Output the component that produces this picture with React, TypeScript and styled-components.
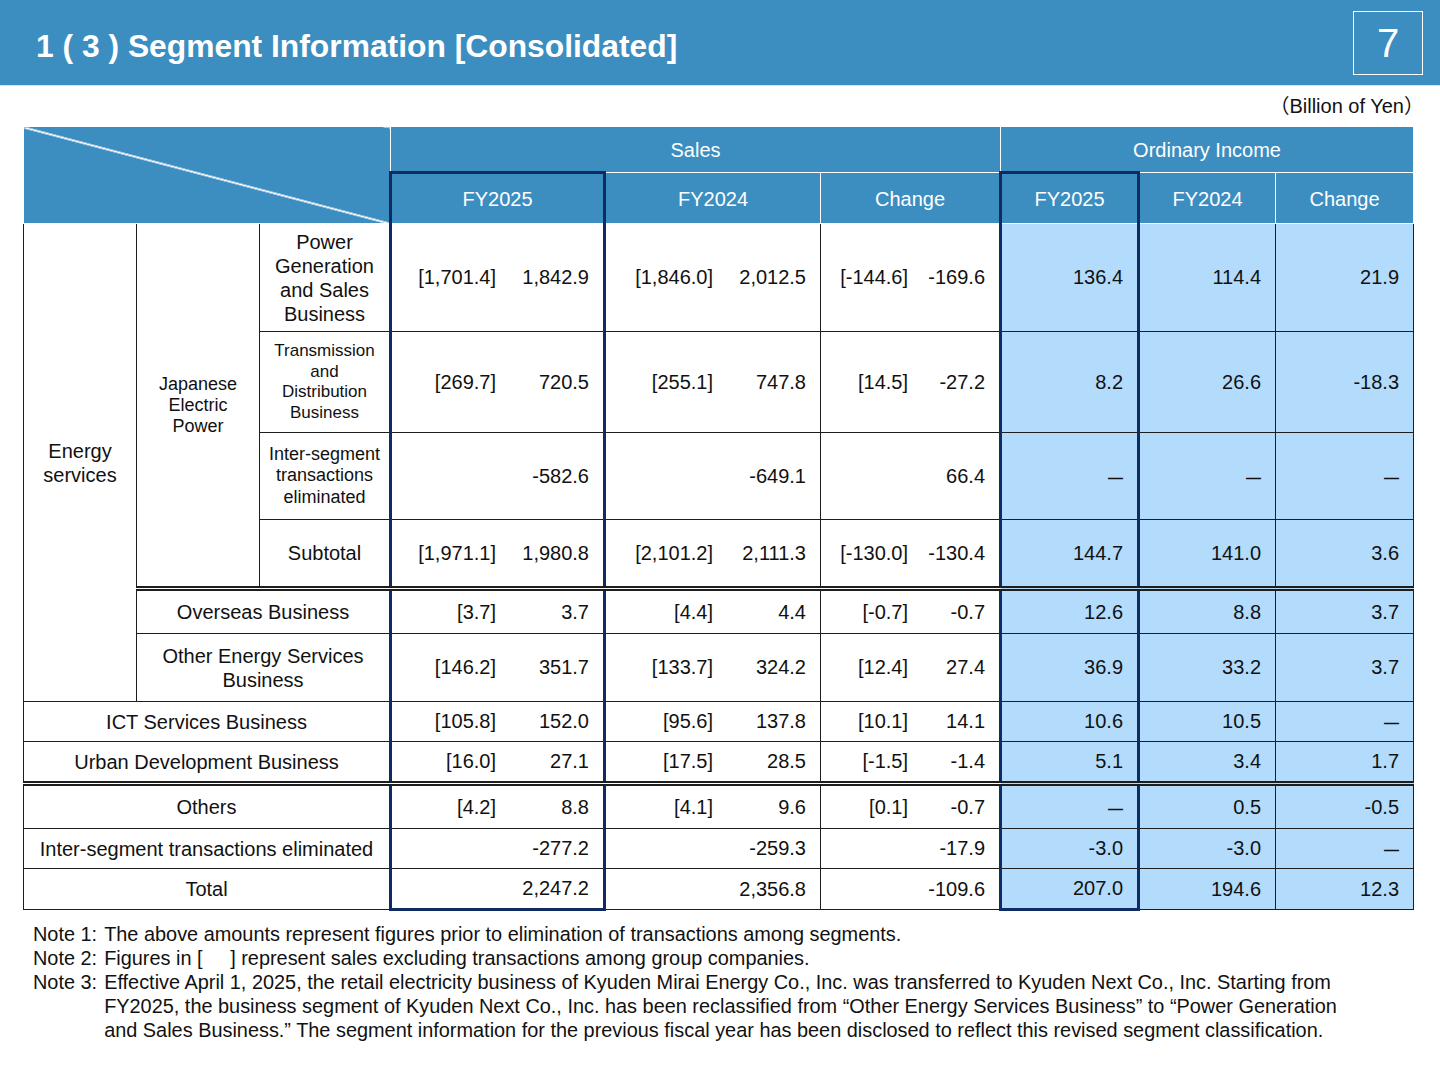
import React from "react";
import styled, { createGlobalStyle, css } from "styled-components";

const GlobalStyle = createGlobalStyle`
  body {
    margin: 0;
    background: #ffffff;
    font-family: "Liberation Sans", Arial, "Noto Sans CJK JP", sans-serif;
    color: #111111;
  }
`;

const BLUE = "#3c8dc0";
const LIGHT = "#b2dbfc";
const NAVY = "#0f2b63";
const LINE = "#1e1e1e";

type Pair = [string, string];

interface Figures {
  sales: [Pair, Pair, Pair];
  income: [string, string, string];
}

const App = () => {
  return (
    <Page>
      <GlobalStyle />
      <TitleBar>
        <Title>1 ( 3 ) Segment Information [Consolidated]</Title>
        <PageNo>7</PageNo>
      </TitleBar>
      <Unit>（Billion of Yen）</Unit>
      <TableWrap>
        <Table>
          <colgroup>
            <col style={{ width: 113 }} />
            <col style={{ width: 123 }} />
            <col style={{ width: 131 }} />
            <col style={{ width: 214 }} />
            <col style={{ width: 216 }} />
            <col style={{ width: 180 }} />
            <col style={{ width: 138 }} />
            <col style={{ width: 137 }} />
            <col style={{ width: 138 }} />
          </colgroup>
          <thead>
            <HeadRow $h={46}>
              <Corner colSpan={3} rowSpan={2} />
              <HeadCell colSpan={3}>Sales</HeadCell>
              <HeadCell colSpan={3}>Ordinary Income</HeadCell>
            </HeadRow>
            <HeadRow $h={51}>
              <HeadCell $box>FY2025</HeadCell>
              <HeadCell>FY2024</HeadCell>
              <HeadCell>Change</HeadCell>
              <HeadCell $box>FY2025</HeadCell>
              <HeadCell>FY2024</HeadCell>
              <HeadCell>Change</HeadCell>
            </HeadRow>
          </thead>
          <tbody>
            <BodyRow $h={108}>
              <Label rowSpan={6}>Energy<br />services</Label>
              <Label rowSpan={4} $size={18} $lh={21}>Japanese<br />Electric<br />Power</Label>
              <Label $lh={24}>Power<br />Generation<br />and Sales<br />Business</Label>
              <NumberCells data={{
                sales: [["[1,701.4]", "1,842.9"], ["[1,846.0]", "2,012.5"], ["[-144.6]", "-169.6"]],
                income: ["136.4", "114.4", "21.9"],
              }} />
            </BodyRow>
            <BodyRow $h={101}>
              <Label $size={17} $lh={20.5}>Transmission<br />and<br />Distribution<br />Business</Label>
              <NumberCells data={{
                sales: [["[269.7]", "720.5"], ["[255.1]", "747.8"], ["[14.5]", "-27.2"]],
                income: ["8.2", "26.6", "-18.3"],
              }} />
            </BodyRow>
            <BodyRow $h={87}>
              <Label $size={18} $lh={21.5}>Inter-segment<br />transactions<br />eliminated</Label>
              <NumberCells data={{
                sales: [["", "-582.6"], ["", "-649.1"], ["", "66.4"]],
                income: ["—", "—", "—"],
              }} />
            </BodyRow>
            <BodyRow $h={69}>
              <Label>Subtotal</Label>
              <NumberCells data={{
                sales: [["[1,971.1]", "1,980.8"], ["[2,101.2]", "2,111.3"], ["[-130.0]", "-130.4"]],
                income: ["144.7", "141.0", "3.6"],
              }} />
            </BodyRow>
            <BodyRow $h={45} $double>
              <Label colSpan={2}>Overseas Business</Label>
              <NumberCells data={{
                sales: [["[3.7]", "3.7"], ["[4.4]", "4.4"], ["[-0.7]", "-0.7"]],
                income: ["12.6", "8.8", "3.7"],
              }} />
            </BodyRow>
            <BodyRow $h={68}>
              <Label colSpan={2} $lh={24}>Other Energy Services<br />Business</Label>
              <NumberCells data={{
                sales: [["[146.2]", "351.7"], ["[133.7]", "324.2"], ["[12.4]", "27.4"]],
                income: ["36.9", "33.2", "3.7"],
              }} />
            </BodyRow>
            <BodyRow $h={40}>
              <Label colSpan={3}>ICT Services Business</Label>
              <NumberCells data={{
                sales: [["[105.8]", "152.0"], ["[95.6]", "137.8"], ["[10.1]", "14.1"]],
                income: ["10.6", "10.5", "—"],
              }} />
            </BodyRow>
            <BodyRow $h={42}>
              <Label colSpan={3}>Urban Development Business</Label>
              <NumberCells data={{
                sales: [["[16.0]", "27.1"], ["[17.5]", "28.5"], ["[-1.5]", "-1.4"]],
                income: ["5.1", "3.4", "1.7"],
              }} />
            </BodyRow>
            <BodyRow $h={45} $double>
              <Label colSpan={3}>Others</Label>
              <NumberCells data={{
                sales: [["[4.2]", "8.8"], ["[4.1]", "9.6"], ["[0.1]", "-0.7"]],
                income: ["—", "0.5", "-0.5"],
              }} />
            </BodyRow>
            <BodyRow $h={40}>
              <Label colSpan={3}>Inter-segment transactions eliminated</Label>
              <NumberCells data={{
                sales: [["", "-277.2"], ["", "-259.3"], ["", "-17.9"]],
                income: ["-3.0", "-3.0", "—"],
              }} />
            </BodyRow>
            <BodyRow $h={41}>
              <Label colSpan={3}>Total</Label>
              <NumberCells last data={{
                sales: [["", "2,247.2"], ["", "2,356.8"], ["", "-109.6"]],
                income: ["207.0", "194.6", "12.3"],
              }} />
            </BodyRow>
          </tbody>
        </Table>
      </TableWrap>
      <Notes>
        <Note>
          <NoteLabel>Note 1:</NoteLabel>
          <NoteText>The above amounts represent figures prior to elimination of transactions among segments.</NoteText>
        </Note>
        <Note>
          <NoteLabel>Note 2:</NoteLabel>
          <NoteText>Figures in [&nbsp;&nbsp;&nbsp;&nbsp;&nbsp;] represent sales excluding transactions among group companies.</NoteText>
        </Note>
        <Note>
          <NoteLabel>Note 3:</NoteLabel>
          <NoteText>
            Effective April 1, 2025, the retail electricity business of Kyuden Mirai Energy Co., Inc. was transferred to Kyuden Next Co., Inc. Starting from<br />
            FY2025, the business segment of Kyuden Next Co., Inc. has been reclassified from “Other Energy Services Business” to “Power Generation<br />
            and Sales Business.” The segment information for the previous fiscal year has been disclosed to reflect this revised segment classification.
          </NoteText>
        </Note>
      </Notes>
    </Page>
  );
};
export default App;

// six figure cells of one row: three sales columns, three income columns
const NumberCells = ({ data, last }: { data: Figures; last?: boolean }) => (
  <>
    {data.sales.map(([bracket, amount], i) => (
      <SalesCell key={"s" + i} $box={i === 0} $last={last}>
        <Split>
          {bracket && <Bracket>{bracket}</Bracket>}
          <Amount $w={i === 2 ? 77 : 93}>{amount}</Amount>
        </Split>
      </SalesCell>
    ))}
    {data.income.map((v, i) => (
      <IncomeCell key={"i" + i} $box={i === 0} $last={last}>
        {v === "—" ? <Dash>—</Dash> : v}
      </IncomeCell>
    ))}
  </>
);

const Page = styled.div`
  width: 1440px;
  min-height: 1080px;
`;

const TitleBar = styled.header`
  height: 86px;
  box-sizing: border-box;
  background: ${BLUE};
  border-bottom: 1px solid #d5e6f1;
  display: flex;
  align-items: center;
  justify-content: space-between;
  padding: 1px 17px 0 36px;
`;

const Title = styled.h1`
  margin: 6px 0 0;
  color: #ffffff;
  font-size: 31.8px;
  font-weight: bold;
  letter-spacing: 0;
`;

const PageNo = styled.div`
  width: 68px;
  height: 62px;
  border: 1px solid #ffffff;
  color: #ffffff;
  font-size: 40px;
  display: flex;
  align-items: center;
  justify-content: center;
`;

const Unit = styled.div`
  text-align: right;
  padding: 8px 16px 8px 0;
  font-size: 20px;
  line-height: 24px;
`;

const TableWrap = styled.div`
  padding-left: 23px;
`;

const Table = styled.table`
  width: 1390px;
  table-layout: fixed;
  border-collapse: collapse;
  font-size: 20px;
`;

const HeadRow = styled.tr<{ $h: number }>`
  height: ${(p) => p.$h}px;
`;

const HeadCell = styled.th<{ $box?: boolean }>`
  background: ${BLUE};
  color: #ffffff;
  font-weight: normal;
  font-size: 20px;
  text-align: center;
  padding: 2px 0 0;
  border: 1px solid #ffffff;
  ${(p) =>
    p.$box &&
    css`
      border-top: 3px solid ${NAVY};
      border-left: 3px solid ${NAVY};
      border-right: 3px solid ${NAVY};
    `}
`;

const Corner = styled.th`
  padding: 0;
  border: 1px solid #ffffff;
  border-left: none;
  background: linear-gradient(
      to top right,
      transparent calc(50% - 1.2px),
      #ffffff calc(50% - 0.6px),
      #ffffff calc(50% + 0.6px),
      transparent calc(50% + 1.2px)
    ),
    ${BLUE};
`;

const BodyRow = styled.tr<{ $h: number; $double?: boolean }>`
  height: ${(p) => p.$h}px;
  ${(p) =>
    p.$double &&
    css`
      & > td {
        border-top: 5px double ${LINE};
      }
    `}
`;

const Label = styled.td<{ $size?: number; $lh?: number }>`
  border: 1px solid ${LINE};
  text-align: center;
  padding: 0 3px;
  font-size: ${(p) => p.$size ?? 20}px;
  line-height: ${(p) => p.$lh ?? 24}px;
`;

const boxEdges = css<{ $box?: boolean; $last?: boolean }>`
  ${(p) =>
    p.$box &&
    css`
      border-left: 3px solid ${NAVY};
      border-right: 3px solid ${NAVY};
    `}
  ${(p) =>
    p.$box &&
    p.$last &&
    css`
      border-bottom: 3px solid ${NAVY};
    `}
`;

const SalesCell = styled.td<{ $box?: boolean; $last?: boolean }>`
  border: 1px solid ${LINE};
  padding: 0 14px 0 0;
  ${boxEdges}
`;

const Split = styled.div`
  display: flex;
  justify-content: flex-end;
  align-items: center;
`;

const Bracket = styled.span`
  white-space: nowrap;
`;

const Amount = styled.span<{ $w: number }>`
  width: ${(p) => p.$w}px;
  text-align: right;
  white-space: nowrap;
`;

const IncomeCell = styled.td<{ $box?: boolean; $last?: boolean }>`
  border: 1px solid ${LINE};
  background: ${LIGHT};
  text-align: right;
  padding: 0 14px 0 0;
  white-space: nowrap;
  ${boxEdges}
`;

const Dash = styled.span`
  font-size: 15px;
  font-weight: bold;
`;

const Notes = styled.div`
  padding: 11px 0 0 33px;
  font-size: 19.9px;
  line-height: 24px;
`;

const Note = styled.div`
  display: flex;
  gap: 7px;
`;

const NoteLabel = styled.span`
  white-space: nowrap;
`;

const NoteText = styled.span`
  white-space: nowrap;
`;
